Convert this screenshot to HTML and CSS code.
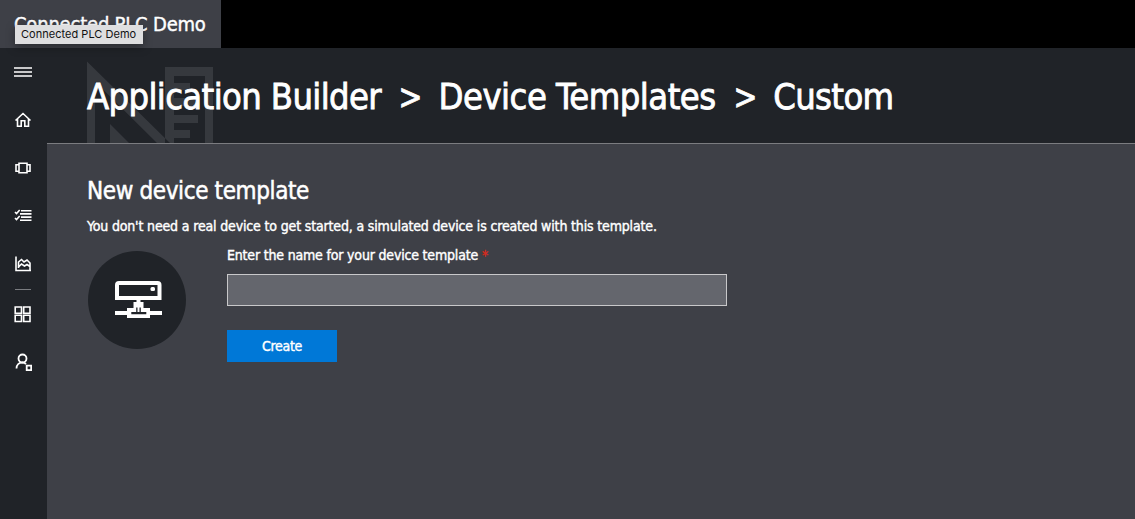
FILE: index.html
```html
<!DOCTYPE html>
<html lang="en">
<head>
<meta charset="utf-8">
<title>Connected PLC Demo</title>
<link rel="stylesheet" href="styles.css">
</head>
<body>
<header class="topbar">
  <div class="app-name"><span class="app-label">Connected PLC Demo</span><div class="tooltip"><span>Connected PLC Demo</span></div></div>
</header>
<div class="shell">
  <nav class="sidebar">
    <a class="nav-item"><svg width="18" height="18" viewBox="0 0 18 18"><path d="M0 5h18M0 9h18M0 13h18" stroke-width="1.700"/></svg></a>
    <a class="nav-item"><svg width="18" height="18" viewBox="0 0 18 18"><path d="M1.500 9.500L9 2.500l7.500 7M3.500 8v7.300h3.700v-5.500h3.600v5.500h3.700V8"/></svg></a>
    <a class="nav-item"><svg width="18" height="18" viewBox="0 0 18 18"><path d="M5 4.300h8v9.400H5zM5 5.800H2v6.400h3M13 5.800h3v6.400h-3"/></svg></a>
    <a class="nav-item"><svg width="18" height="18" viewBox="0 0 18 18"><path d="M7 3.700h10.500M6 6.900h11.500M7 10.100h10.500M6 13.300h11.500M1 5l1.500 1.500L5.700 3M1 11l1.500 1.500L5.700 9"/></svg></a>
    <a class="nav-item"><svg width="18" height="18" viewBox="0 0 18 18"><path d="M2 1.500v14h15M4.500 13V7l3-2.500L10 7l3-2 3 3v7M4.500 12l3-3 3 2 2.500-1.500 3 2"/></svg></a>
    <div class="divider"></div>
    <a class="nav-item"><svg width="18" height="18" viewBox="0 0 18 18"><path d="M1.200 2h6.300v6.300H1.200zM9.700 2H16v6.300H9.700zM1.200 10.200h6.300v6.300H1.200zM9.700 10.200H16v6.300H9.700z"/></svg></a>
    <a class="nav-item"><svg width="18" height="18" viewBox="0 0 18 18"><circle cx="8.500" cy="5.500" r="4" stroke-width="1.800"/><path d="M2.500 15.500c0-3.500 2.500-6 6-6 1.500 0 2.500.5 3.500 1.500M12.700 12.700h4.500v4.500h-4.500z" stroke-width="1.800"/></svg></a>
  </nav>
  <main class="main">
    <div class="page-head">
      <svg class="watermark" width="127" height="82" viewBox="87 61 127 82"><path fill-rule="evenodd" d="M87 61.500L172 145H87zM95 81.500V145H159zM110 124L130 144H110zM165 67h48v77h-48zM174 76v7h16v7h-16v8h24v8h-24v9h24v8h-24v7h16v8h-16v8h31V76z"/></svg>
      <h1 class="crumbs"><span class="c1">Application Builder</span><span class="sep">&gt;</span><span class="c2">Device Templates</span><span class="sep">&gt;</span><span class="c3">Custom</span></h1>
    </div>
    <section class="content">
      <h2 class="heading"><span>New device template</span></h2>
      <p class="intro"><span>You don't need a real device to get started, a simulated device is created with this template.</span></p>
      <div class="form-row">
        <div class="device"><svg width="48" height="40" viewBox="0 0 48 40"><path d="M2 18V5q0-2 2-2h38.500q2 0 2 2v13z" stroke-width="4"/><rect x="35.500" y="7" width="4.500" height="4" rx="1.500" fill="#fff" stroke="none"/><path fill="#fff" stroke="none" fill-rule="evenodd" d="M21.500 19h4v3h3v6h6.500v3h12v4H35v3H12v-3H0v-4h12v-3h6.500v-6h3zM16.300 32v2.300h15V32h-5.500v-4.500h-1.300V32h-2v-4.500h-1.300V32z"/></svg></div>
        <form class="form">
          <label class="label" for="name"><span class="lt">Enter the name for your device template</span> <span class="star">*</span></label>
          <input class="field" id="name" type="text">
          <button class="create" type="button">Create</button>
        </form>
      </div>
    </section>
  </main>
</div>
</body>
</html>
```
FILE: styles.css
```css
* { box-sizing: border-box; }
body { margin: 0; width: 1135px; height: 519px; overflow: hidden; color: #fff; background: #3e4047; font-family: "DejaVu Sans Condensed", "DejaVu Sans", sans-serif; font-stretch: condensed; }
.topbar { height: 48px; background: #000; }
.app-name { position: relative; width: 221px; height: 48px; padding-left: 14px; background: #3e4047; font-size: 20px; line-height: 49px; letter-spacing: -.2px; white-space: nowrap; }
.app-label { -webkit-text-stroke: .4px #fff; }
.tooltip { position: absolute; left: 15px; top: 25px; z-index: 2; width: 128px; height: 19px; padding-left: 6px; background: #dededf; color: #111; box-shadow: 0 3px 10px rgba(0,0,0,.35); font: 11px/18px Inter, sans-serif; letter-spacing: .03px; }
.shell { display: flex; height: 471px; }
.sidebar { width: 47px; background: #202328; }
.nav-item { display: flex; width: 47px; height: 48px; padding-right: 1px; align-items: center; justify-content: center; }
.nav-item svg { fill: none; stroke: #fff; stroke-width: 1.6; }
.divider { width: 16px; height: 1px; margin: 1px 0 0 15px; background: #7a7c80; }
.main { flex: 1; }
.page-head { display: grid; height: 96px; padding-left: 40px; background: #202328; border-bottom: 1px solid #7b7c80; }
.watermark { grid-area: 1 / 1; margin-top: 13px; fill: #36393e; }
.crumbs { grid-area: 1 / 1; z-index: 1; display: flex; gap: 16px; margin: 0; font-size: 36px; font-weight: 400; line-height: 98px; letter-spacing: -.62px; white-space: nowrap; -webkit-text-stroke: .8px #fff; }
.c2 { letter-spacing: -.5px; }
.sep { width: 25.5px; transform: scaleX(.88); }
.content { padding: 32px 0 0 40px; }
.heading { margin: 0; font-size: 24px; font-weight: 400; line-height: 30px; letter-spacing: -.38px; -webkit-text-stroke: .5px #fff; }
.intro { margin: 10px 0 0; font-size: 14px; line-height: 20px; letter-spacing: -.155px; white-space: nowrap; -webkit-text-stroke: .4px #fff; }
.form-row { display: flex; margin-top: 15px; }
.device { display: flex; align-items: center; justify-content: center; width: 98px; height: 98px; margin-left: 1px; padding-left: 3px; border-radius: 50%; background: #202328; }
.device svg { fill: none; stroke: #fff; }
.form { display: flex; flex-direction: column; align-items: flex-start; margin: -6px 0 0 41px; }
.label { font-size: 14px; line-height: 20px; letter-spacing: -.18px; white-space: nowrap; }
.lt { -webkit-text-stroke: .4px #fff; }
.star { color: #d52b1e; -webkit-text-stroke: .4px #d52b1e; }
.field { width: 500px; height: 32px; margin-top: 9px; border: 1px solid #c8c8ca; background: #64666d; color: #fff; }
.create { width: 110px; height: 32px; margin-top: 24px; padding: 0; border: 0; background: #0078d7; color: #fff; font: 14px/30px "DejaVu Sans Condensed", sans-serif; letter-spacing: -.3px; -webkit-text-stroke: .4px #fff; }
```
